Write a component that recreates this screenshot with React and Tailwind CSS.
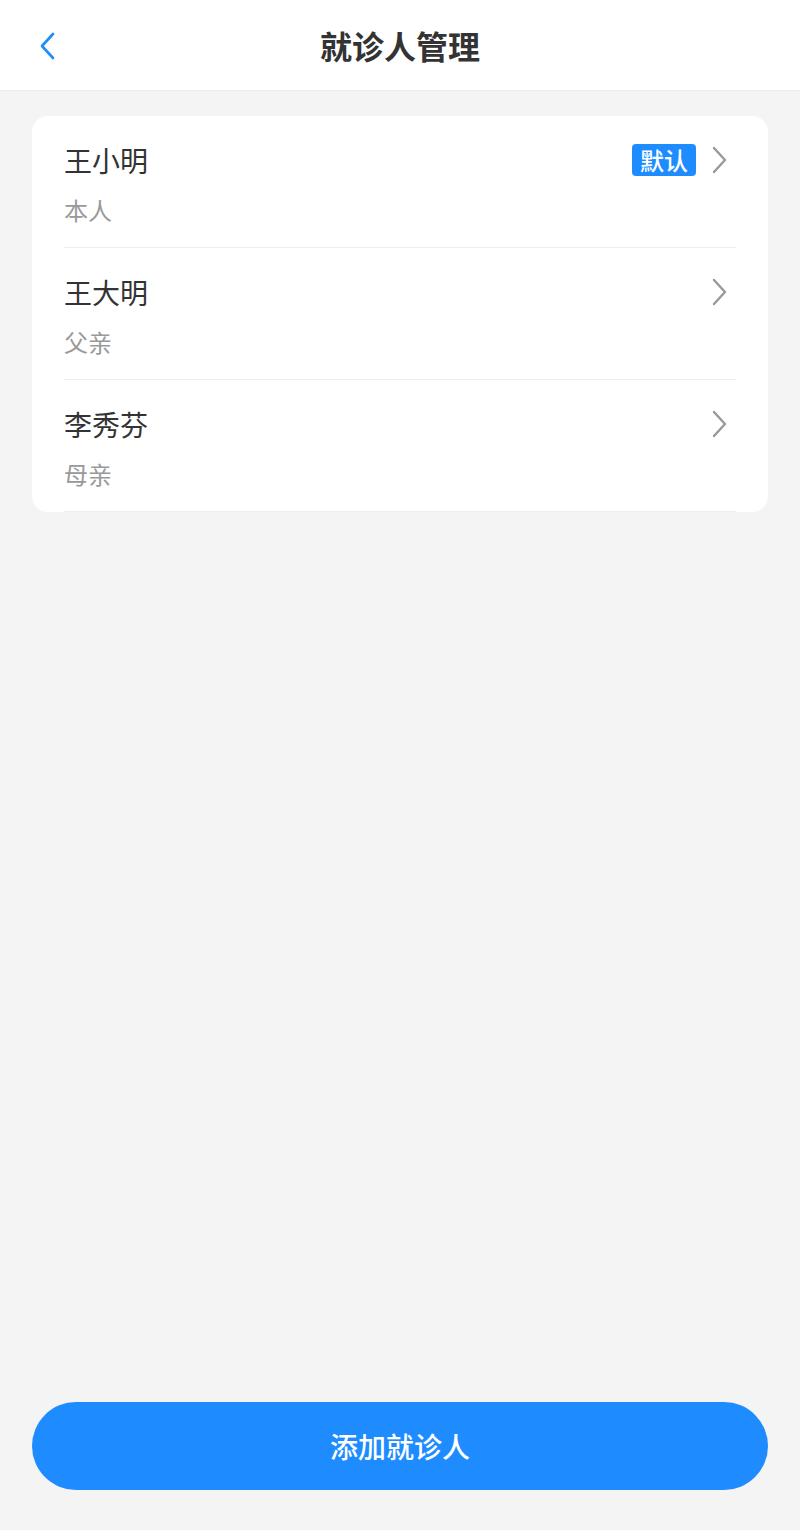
import React from "react";

const patients = [
  { name: "王小明", relation: "本人", isDefault: true },
  { name: "王大明", relation: "父亲" },
  { name: "李秀芬", relation: "母亲" },
];

function ChevronRight({ className = "" }) {
  return (
    <svg width="20" height="28" viewBox="0 0 20 28" fill="none" className={className}>
      <path d="M4 2 L15 14 L4 26" stroke="currentColor" strokeWidth="2.4" strokeLinecap="round" strokeLinejoin="round" />
    </svg>
  );
}

function ChevronLeft({ className = "" }) {
  return (
    <svg width="20" height="28" viewBox="0 0 20 28" fill="none" className={className}>
      <path d="M15 2 L4 14 L15 26" stroke="currentColor" strokeWidth="2.6" strokeLinecap="round" strokeLinejoin="round" />
    </svg>
  );
}

export default function App() {
  return (
    <div
      className="flex h-[1530px] w-full flex-col bg-[#f4f4f4]"
      style={{ fontFamily: '"Noto Sans CJK SC", "Noto Sans", sans-serif' }}
    >
      {/* Header */}
      <div className="relative flex h-[91px] shrink-0 items-center justify-center border-b border-[#ececec] bg-white">
        <button className="absolute left-[38px] top-[32px] text-[#1e8cff]">
          <ChevronLeft />
        </button>
        <h1 className="text-[32px] font-bold leading-none text-[#333]">就诊人管理</h1>
      </div>

      {/* Patient list */}
      <div className="mx-8 mt-[25px] overflow-hidden rounded-2xl bg-white">
        {patients.map((p) => (
          <div key={p.name} className="mx-8 border-b border-[#eeeeee] pb-[21px] pt-6">
            <div className="flex h-10 items-center justify-between">
              <span className="text-[28px] leading-10 text-[#333]">{p.name}</span>
              <div className="flex items-center gap-[14px]">
                {p.isDefault && (
                  <span className="flex h-8 w-16 items-center justify-center rounded-[4px] bg-[#1e8cff] text-[24px] font-medium leading-none text-white">
                    默认
                  </span>
                )}
                <ChevronRight className="mr-[6px] text-[#999]" />
              </div>
            </div>
            <div className="mt-[14px] text-[24px] leading-8 text-[#999]">{p.relation}</div>
          </div>
        ))}
      </div>

      <div className="flex-1" />

      {/* Add button */}
      <button className="mx-8 mb-10 flex h-[88px] shrink-0 items-center justify-center rounded-full bg-[#1e8cff] text-[28px] font-medium text-white">
        添加就诊人
      </button>
    </div>
  );
}
